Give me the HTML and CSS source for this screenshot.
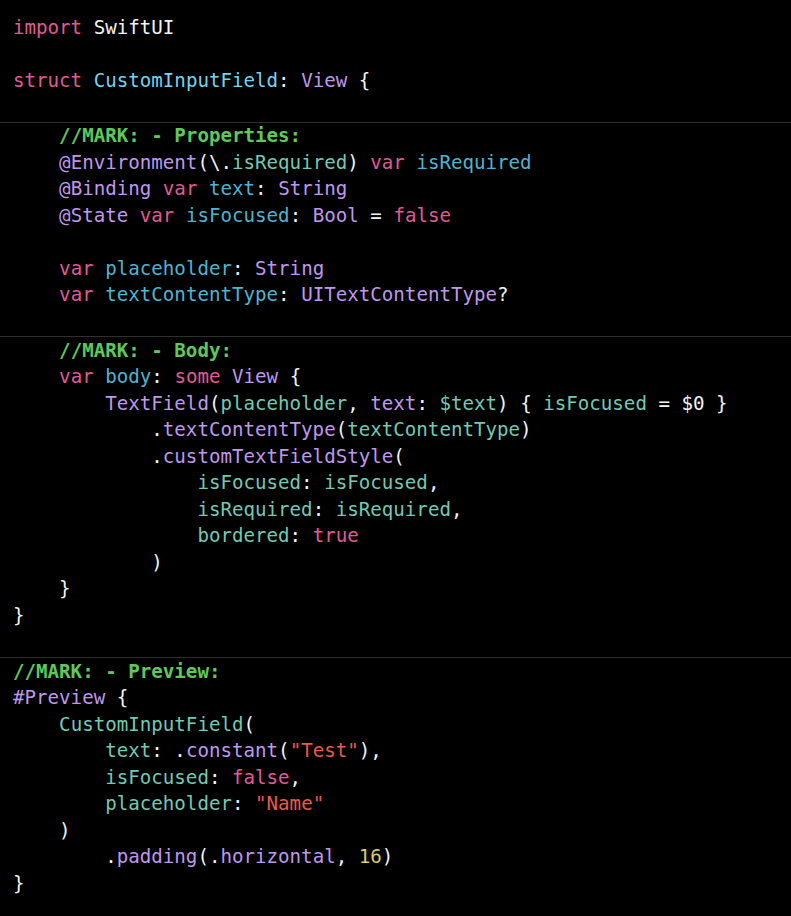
FILE: index.html
```html
<!DOCTYPE html>
<html>
<head>
<meta charset="utf-8">
<link rel="stylesheet" href="styles.css">
</head>
<body>
<div class="editor">
<div class="section first"><div class="line"><span class="kw">import</span> SwiftUI</div><div class="line"> </div><div class="line"><span class="kw">struct</span> <span class="decl-type">CustomInputField</span>: <span class="type">View</span> {</div><div class="line"> </div></div>
<div class="section"><div class="line">    <span class="mark">//MARK: - Properties:</span></div><div class="line">    <span class="type">@Environment</span>(\.<span class="proj">isRequired</span>) <span class="kw">var</span> <span class="decl">isRequired</span></div><div class="line">    <span class="type">@Binding</span> <span class="kw">var</span> <span class="decl">text</span>: <span class="type">String</span></div><div class="line">    <span class="type">@State</span> <span class="kw">var</span> <span class="decl">isFocused</span>: <span class="type">Bool</span> = <span class="kw">false</span></div><div class="line"> </div><div class="line">    <span class="kw">var</span> <span class="decl">placeholder</span>: <span class="type">String</span></div><div class="line">    <span class="kw">var</span> <span class="decl">textContentType</span>: <span class="type">UITextContentType</span>?</div><div class="line"> </div></div>
<div class="section"><div class="line">    <span class="mark">//MARK: - Body:</span></div><div class="line">    <span class="kw">var</span> <span class="decl">body</span>: <span class="kw">some</span> <span class="type">View</span> {</div><div class="line">        <span class="type">TextField</span>(<span class="proj">placeholder</span>, <span class="type">text</span>: <span class="proj">$text</span>) { <span class="proj">isFocused</span> = $0 }</div><div class="line">            .<span class="type">textContentType</span>(<span class="proj">textContentType</span>)</div><div class="line">            .<span class="type">customTextFieldStyle</span>(</div><div class="line">                <span class="proj">isFocused</span>: <span class="proj">isFocused</span>,</div><div class="line">                <span class="proj">isRequired</span>: <span class="proj">isRequired</span>,</div><div class="line">                <span class="proj">bordered</span>: <span class="kw">true</span></div><div class="line">            )</div><div class="line">    }</div><div class="line">}</div><div class="line"> </div></div>
<div class="section"><div class="line"><span class="mark">//MARK: - Preview:</span></div><div class="line"><span class="type">#Preview</span> {</div><div class="line">    <span class="proj">CustomInputField</span>(</div><div class="line">        <span class="proj">text</span>: .<span class="type">constant</span>(<span class="str">"Test"</span>),</div><div class="line">        <span class="proj">isFocused</span>: <span class="kw">false</span>,</div><div class="line">        <span class="proj">placeholder</span>: <span class="str">"Name"</span></div><div class="line">    )</div><div class="line">        .<span class="type">padding</span>(.<span class="type">horizontal</span>, <span class="num">16</span>)</div><div class="line">}</div></div>
</div>
</body>
</html>
```

FILE: styles.css
```css
html, body {
  margin: 0;
  padding: 0;
  background: #000000;
}

.editor {
  padding-top: 14.5px;
  font-family: "DejaVu Sans Mono", "Liberation Mono", monospace;
  font-size: 19.15px;
  color: #f4f4f4;
  width: 791px;
  height: 916px;
  overflow: hidden;
  box-sizing: border-box;
}

.section {
  border-top: 1px solid #303030;
  margin-top: 1px;
}

.section.first {
  border-top: none;
  margin-top: 0;
}

.line {
  white-space: pre;
  height: 26.5px;
  line-height: 26.5px;
  padding-left: 13px;
}

.line:first-child {
  padding-top: 0;
}

.section > .line:first-child {
  margin-top: 0.7px;
}

.section.first > .line:first-child {
  margin-top: 0;
}

.kw { color: #e05a95; }
.decl-type { color: #74d4f0; }
.decl { color: #4fb4d2; }
.type { color: #bf98ee; }
.proj { color: #72cab2; }
.mark { color: #5ec95a; font-weight: bold; }
.str { color: #ea584e; }
.num { color: #ddc96f; }
```
